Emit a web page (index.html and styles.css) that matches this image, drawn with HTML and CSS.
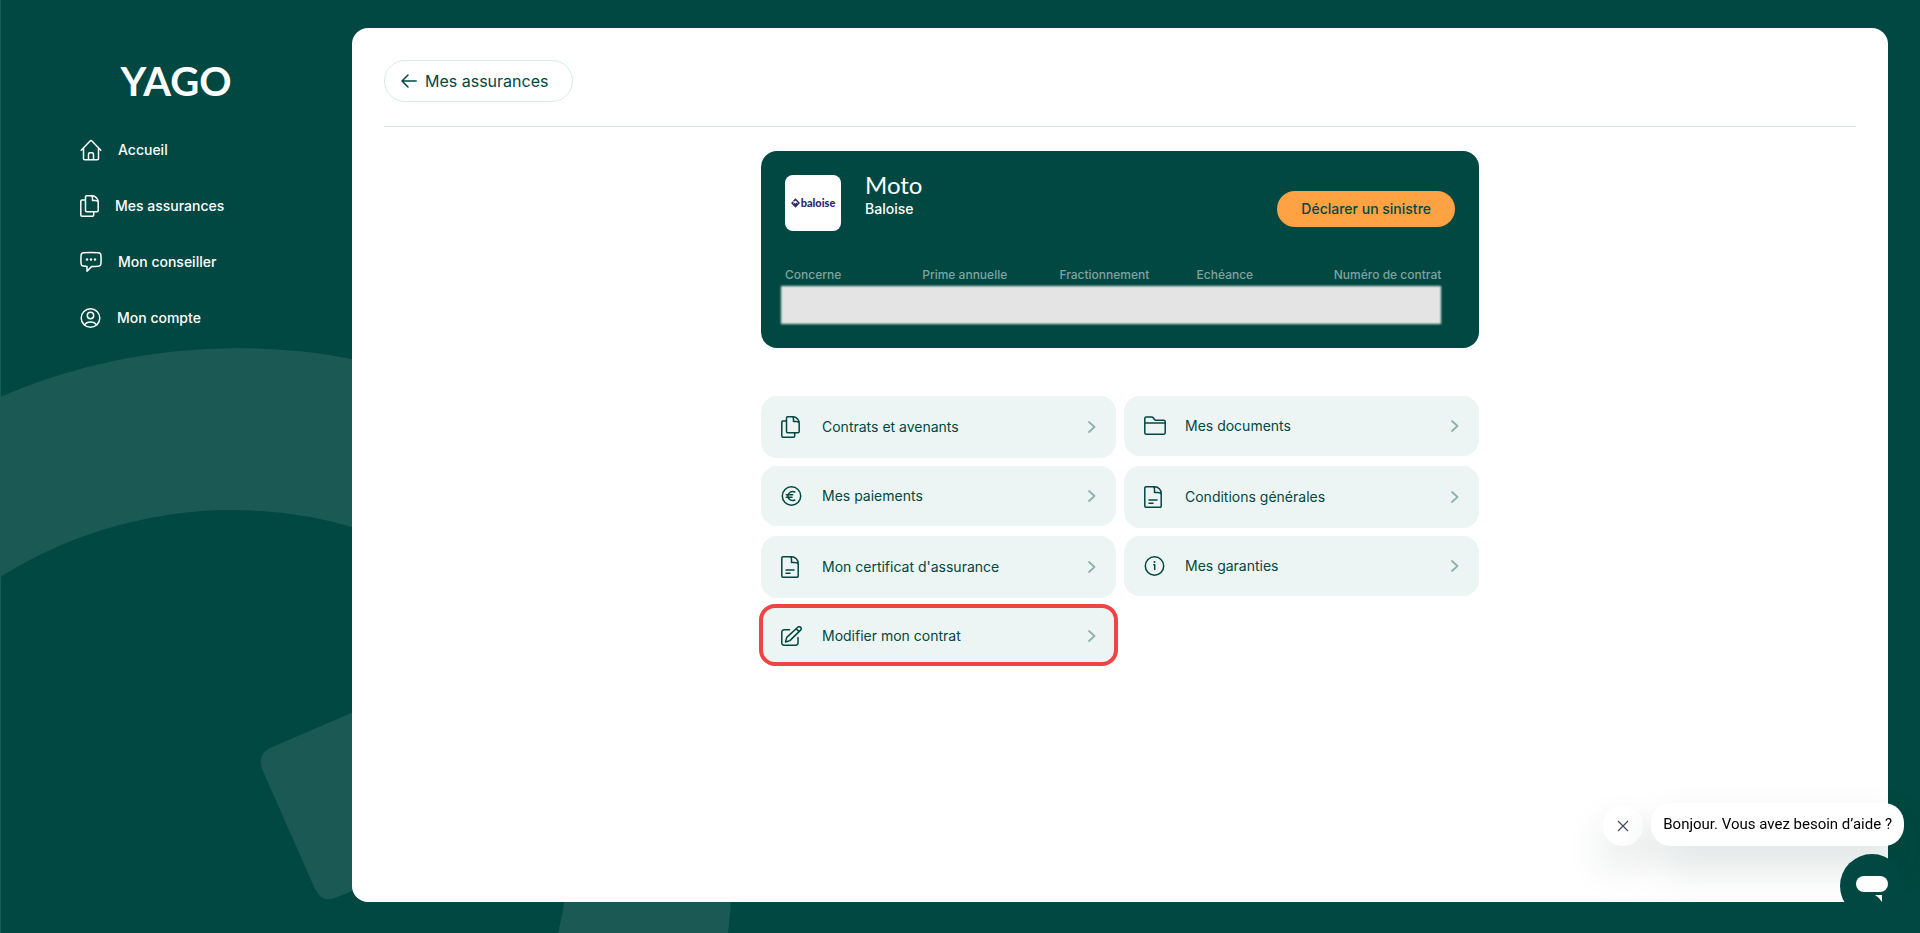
FILE: index.html
```html
<!DOCTYPE html>
<html lang="fr">
<head>
<meta charset="utf-8">
<meta name="viewport" content="width=device-width, initial-scale=1">
<title>Yago</title>
<link rel="stylesheet" href="styles.css">
</head>
<body>
<svg class="defs" width="0" height="0" aria-hidden="true">
  <symbol id="i-copy" viewBox="0 0 19 22"><path d="M5.500 5H2a1.200 1.200 0 0 0-1.200 1.200V20A1.200 1.200 0 0 0 2 21.200h10.500a1.200 1.200 0 0 0 1.200-1.200v-3.200M6.700.8h5.300c3.500 0 6.200 3 6.200 6.500v8.200a1.200 1.200 0 0 1-1.200 1.200H6.700a1.200 1.200 0 0 1-1.200-1.200V2A1.200 1.200 0 0 1 6.700.8zM11.500.8c.9.500 1 1.400 1 2.500v2.200h2.700c1.500 0 2.600.5 3 1.600"/></symbol>
  <symbol id="i-doc" viewBox="0 0 18 22"><path d="M2 .8h8.500c4 0 6.700 3 6.700 6.700V20a1.200 1.200 0 0 1-1.200 1.200H2A1.200 1.200 0 0 1 .8 20V2A1.200 1.200 0 0 1 2 .8zM9 .8c1.300.3 1.500 1.200 1.500 2.400v3.300h3.200c1.800 0 3 .5 3.500 1.700M5 14h8M5 17.300h4"/></symbol>
  <symbol id="i-chevron" viewBox="0 0 8 12"><path d="M1 1l5.500 5L1 11"/></symbol>
</svg>
<div class="page">
  <svg class="backdrop" viewBox="0 0 740 933" aria-hidden="true">
    <path d="M0 397A603 603 0 0 1 352 359C580 400 731 600 731 890Q731 910 728 933H558Q572 880 566 800C560 650 480 560 352 527A435 435 0 0 0 0 577z"/>
    <path d="M400 692L270 748Q257 755 262 769L315 889Q322 903 335 898L400 871z"/>
  </svg>

  <aside class="sidebar">
    <a class="brand" href="#">YAGO</a>
    <nav class="menu">
      <a class="menu-link" href="#"><svg class="icon" width="22" height="22" viewBox="0 0 22 22"><path d="M1.200 11.200l8.900-9.300a1.200 1.200 0 0 1 1.800 0l8.900 9.300M3.500 9v10.600a1.200 1.200 0 0 0 1.200 1.200h12.600a1.200 1.200 0 0 0 1.200-1.200V9M8.500 20.500v-5.300a1.500 1.500 0 0 1 1.500-1.500h2a1.500 1.500 0 0 1 1.500 1.500v5.300"/></svg>Accueil</a>
      <a class="menu-link" href="#"><svg class="icon" width="19" height="22"><use href="#i-copy"/></svg>Mes assurances</a>
      <a class="menu-link" href="#"><svg class="icon" width="22" height="22" viewBox="0 0 22 22"><path d="M3.500 1.800q7.500-.8 15 0a2.600 2.600 0 0 1 2.400 2.400q.4 4.300 0 8.600a2.600 2.600 0 0 1-2.400 2.400q-3.500.4-7 .4l-4.500 4.500v-4.700l-3.500-.3a2.600 2.600 0 0 1-2.400-2.400q-.4-4.200 0-8.500a2.600 2.600 0 0 1 2.400-2.400z"/><g class="fill"><circle cx="7" cy="8.500" r="1.200"/><circle cx="11" cy="8.500" r="1.200"/><circle cx="15" cy="8.500" r="1.200"/></g></svg>Mon conseiller</a>
      <a class="menu-link" href="#"><svg class="icon" width="21" height="22" viewBox="0 0 21 22"><circle cx="10.500" cy="11" r="9.300"/><circle cx="10.500" cy="8.500" r="3.200"/><path d="M4.500 18c1.200-2.200 3.300-3 6-3s4.800.8 6 3"/></svg>Mon compte</a>
    </nav>
  </aside>

  <main class="panel">
    <header class="panel-head">
      <a class="back" href="#"><svg class="icon" width="16" height="14" viewBox="0 0 16 14"><path d="M15.200 7H1M7 1L1 7l6 6"/></svg>Mes assurances</a>
    </header>

    <div class="content">
      <section class="policy">
        <div class="policy-top">
          <div class="insurer">
            <svg width="9" height="10" viewBox="0 0 9 10" aria-hidden="true"><path d="M2.600 3.200L4.500 1.300 8 5 4.500 8.700 1 5l1.300-1.300M3 5.200l1.500 1.500L6.100 5" fill="none" stroke="#2c2a6b" stroke-width="1.500"/></svg>
            <span>baloise</span>
          </div>
          <div class="policy-name">
            <h1>Moto</h1>
            <p>Baloise</p>
          </div>
          <button class="claim" type="button">Déclarer un sinistre</button>
        </div>
        <div class="facts">
          <span>Concerne</span>
          <span>Prime annuelle</span>
          <span>Fractionnement</span>
          <span>Echéance</span>
          <span>Numéro de contrat</span>
        </div>
        <div class="masked"></div>
      </section>

      <nav class="tiles">
        <a class="tile" href="#"><svg class="icon" width="20" height="22"><use href="#i-copy" width="19" height="22"/></svg><span>Contrats et avenants</span><svg class="chevron" width="8" height="12"><use href="#i-chevron"/></svg></a>
        <a class="tile" href="#"><svg class="icon" width="22" height="20" viewBox="0 0 22 20"><path d="M.8 7V2.500A1.500 1.500 0 0 1 2.300 1h5.400c.8 0 1.300.4 1.700 1l1 1.500c.4.500.8.700 1.400.7h7.900a1.500 1.500 0 0 1 1.500 1.500V16.700a1.500 1.500 0 0 1-1.500 1.500H2.300a1.500 1.500 0 0 1-1.500-1.500zh20.400"/></svg><span>Mes documents</span><svg class="chevron" width="8" height="12"><use href="#i-chevron"/></svg></a>
        <a class="tile" href="#"><svg class="icon" width="22" height="20" viewBox="0 0 22 20"><circle cx="10.500" cy="10" r="9.200"/><path d="M13.800 6a4.600 4.600 0 0 0-6.800 4 4.600 4.600 0 0 0 6.800 4M5.200 8.800h6.500M5.200 11.200h5.800"/></svg><span>Mes paiements</span><svg class="chevron" width="8" height="12"><use href="#i-chevron"/></svg></a>
        <a class="tile" href="#"><svg class="icon" width="18" height="22"><use href="#i-doc"/></svg><span>Conditions générales</span><svg class="chevron" width="8" height="12"><use href="#i-chevron"/></svg></a>
        <a class="tile" href="#"><svg class="icon" width="18" height="22"><use href="#i-doc"/></svg><span>Mon certificat d'assurance</span><svg class="chevron" width="8" height="12"><use href="#i-chevron"/></svg></a>
        <a class="tile" href="#"><svg class="icon" width="22" height="20" viewBox="0 0 22 20"><circle cx="10.500" cy="10" r="9.200"/><path d="M9.800 8.800h.9v4.800"/><circle class="fill" cx="10.500" cy="6" r="1"/></svg><span>Mes garanties</span><svg class="chevron" width="8" height="12"><use href="#i-chevron"/></svg></a>
        <a class="tile tile-active" href="#"><svg class="icon" width="22" height="20" viewBox="0 0 22 20"><path d="M8.500 3.800H3A2.200 2.200 0 0 0 .8 6v11A2.200 2.200 0 0 0 3 19.200h11.800A2.200 2.200 0 0 0 17 17v-5.500M4.500 16l1.300-4.600L16.700 1.300a2 2 0 0 1 2.900 0 2 2 0 0 1 0 2.800L8.900 14.600zM15.200 2.700l2.900 2.900"/></svg><span>Modifier mon contrat</span><svg class="chevron" width="8" height="12"><use href="#i-chevron"/></svg></a>
      </nav>
    </div>
  </main>

  <div class="chat">
    <div class="chat-row">
      <button class="chat-close" type="button" aria-label="Fermer"><svg width="12" height="12" viewBox="0 0 12 12"><path d="M1 1l10 10M11 1L1 11" fill="none" stroke="#3d4b50" stroke-width="1.200"/></svg></button>
      <p class="chat-bubble">Bonjour. Vous avez besoin d’aide ?</p>
    </div>
    <button class="chat-launch" type="button" aria-label="Ouvrir le chat"><svg width="32" height="26" viewBox="0 0 32 26"><rect width="32" height="16" rx="8" fill="#fff"/><path d="M19 19h7v7q-2-4-7-7z" fill="#fff"/></svg></button>
  </div>
</div>
</body>
</html>
```
FILE: styles.css
```css
* { box-sizing: border-box; }

body {
  margin: 0;
  background: #004841;
  color: #004841;
  font-family: Inter, "Liberation Sans", sans-serif;
  font-size: 14px;
  line-height: 20px;
}

h1, p { margin: 0; }
a { color: inherit; text-decoration: none; }
button { border: 0; font: inherit; cursor: pointer; }

.defs { position: absolute; }

.page {
  position: relative;
  display: grid;
  grid-template-columns: 352px 1fr;
  min-height: 100vh;
  padding: 28px 32px 31px 0;
  overflow: hidden;
  box-shadow: inset 1px 0 #1a5a54;
}

.backdrop {
  position: absolute;
  left: 0;
  bottom: 0;
  width: 740px;
  fill: #1a5954;
}

.icon {
  flex: none;
  fill: none;
  stroke: currentColor;
  stroke-width: 1.5;
  stroke-linecap: round;
  stroke-linejoin: round;
}

.icon .fill { fill: currentColor; stroke: none; }

.sidebar {
  position: relative;
  display: flex;
  flex-direction: column;
  gap: 32px;
  padding-top: 32px;
  color: #fff;
}

.brand {
  align-self: center;
  font: 700 40px/42px Lato, sans-serif;
}

.menu {
  display: flex;
  flex-direction: column;
  gap: 24px;
  padding-left: 80px;
}

.menu-link {
  display: flex;
  align-items: center;
  gap: 16px;
  height: 32px;
  font-weight: 500;
}

.panel {
  position: relative;
  padding: 32px;
  border-radius: 16px;
  background: #fff;
}

.panel-head {
  display: flex;
  padding-bottom: 24px;
  border-bottom: 1px solid #d8ebe9;
}

.back {
  display: flex;
  align-items: center;
  gap: 8px;
  padding: 8px 24px 8px 16px;
  border: 1px solid #d8ebe9;
  border-radius: 24px;
  font-size: 16px;
  line-height: 24px;
}

.content {
  max-width: 718px;
  margin: 24px auto 0;
}

.policy {
  padding: 24px;
  border-radius: 16px;
  background: #004841;
  color: #fff;
}

.policy-top {
  display: flex;
  gap: 24px;
}

.insurer {
  display: flex;
  align-items: center;
  justify-content: center;
  gap: 1px;
  width: 56px;
  height: 56px;
  border-radius: 8px;
  background: #fff;
  color: #2c2a6b;
  font: 900 11px/12px Lato, sans-serif;
}

.policy-name { flex: 1; font-weight: 500; }
.policy-name h1 { margin-bottom: 4px; font: 400 24px/20px Lato, sans-serif; }

.claim {
  align-self: flex-end;
  height: 36px;
  margin-bottom: 4px;
  padding: 0 24px;
  border-radius: 18px;
  background: #ffa244;
  color: #004841;
  font-weight: 500;
}

.facts {
  display: grid;
  grid-template-columns: repeat(5, 1fr);
  gap: 16px;
  margin-top: 34px;
  color: #7fa3a0;
  font-size: 12px;
  font-weight: 500;
  white-space: nowrap;
}

.masked {
  height: 38px;
  margin: 1px 14px 0 -4px;
  background: #e4e4e4;
  filter: blur(1px);
}

.tiles {
  display: grid;
  grid-template-columns: 1fr 1fr;
  align-items: start;
  gap: 8px;
  margin-top: 48px;
}

.tile {
  position: relative;
  display: grid;
  grid-template-columns: 25px 1fr auto;
  align-items: center;
  gap: 16px;
  padding: 20px;
  border-radius: 16px;
  background: #ecf5f4;
}

.chevron {
  fill: none;
  stroke: #8fb0ad;
  stroke-width: 1.8;
  stroke-linecap: round;
  stroke-linejoin: round;
}

.tile-active::after {
  content: "";
  position: absolute;
  inset: -2px -2px 0;
  border: 4px solid #f04444;
  border-radius: 16px;
}

.chat {
  position: fixed;
  right: 16px;
  bottom: 15px;
  display: flex;
  flex-direction: column;
  align-items: flex-end;
  gap: 8px;
}

.chat-row {
  display: flex;
  align-items: flex-end;
  gap: 8px;
}

.chat-close,
.chat-bubble {
  background: #fff;
  box-shadow: 0 20px 40px rgba(0, 50, 46, 0.14);
}

.chat-close {
  display: grid;
  place-items: center;
  width: 40px;
  height: 40px;
  padding: 0;
  border-radius: 50%;
}

.chat-bubble {
  padding: 11px 12px 12px;
  border-radius: 20px;
  color: #000;
  font-family: Roboto, sans-serif;
  font-size: 15px;
}

.chat-launch {
  display: grid;
  justify-items: center;
  width: 64px;
  height: 64px;
  padding: 22px 0 0;
  border-radius: 50%;
  background: #004841;
}
```
